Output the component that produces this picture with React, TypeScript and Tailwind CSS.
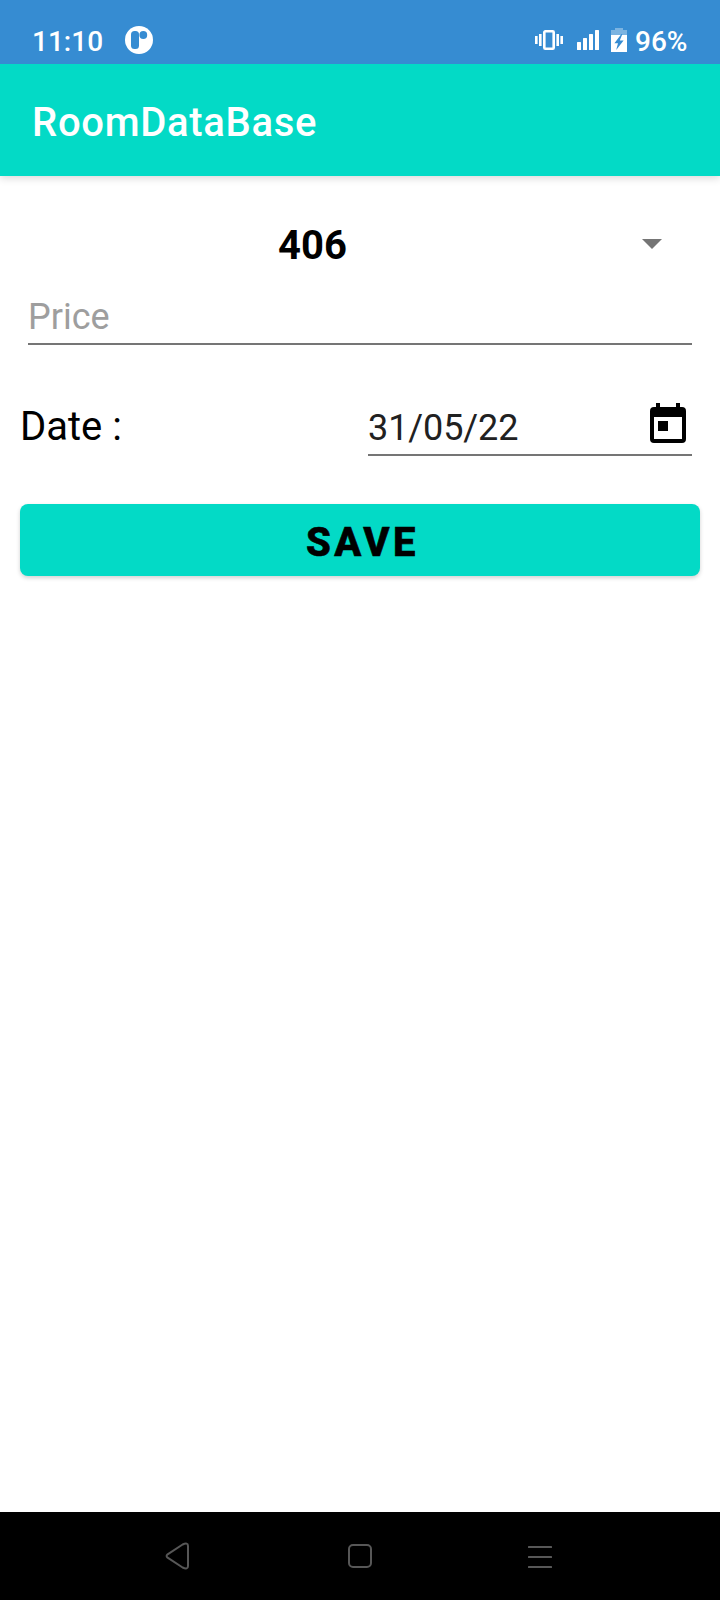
function StatusBar() {
  return (
    <div className="relative z-20 flex h-16 items-start bg-[#368cd2] pr-8 pl-8 text-[28px] leading-8 font-medium text-white">
      <span className="mt-[26px] w-[70px] whitespace-nowrap">11:10</span>
      <svg className="mt-[26px] ml-[23px]" width="28" height="28" viewBox="0 0 28 28">
        <circle cx="14" cy="14" r="14" fill="#fff" />
        <rect x="6" y="5" width="8" height="18" rx="3.5" fill="#368cd2" />
        <circle cx="18.3" cy="9" r="3.9" fill="#368cd2" />
      </svg>
      <div className="ml-auto flex">
        <svg className="mt-[30px]" width="28" height="20" viewBox="0 0 28 20" fill="#fff">
          <rect x="0" y="6" width="2.6" height="8" />
          <rect x="4" y="4" width="2.6" height="12" />
          <rect x="9.3" y="1.3" width="9.4" height="17.4" rx="1" fill="none" stroke="#fff" strokeWidth="2.6" />
          <rect x="21.4" y="4" width="2.6" height="12" />
          <rect x="25.4" y="6" width="2.6" height="8" />
        </svg>
        <svg className="mt-[30px] ml-[14px]" width="22" height="20" viewBox="0 0 22 20" fill="#fff">
          <rect x="0" y="12" width="4" height="8" rx=".5" />
          <rect x="6" y="8" width="4" height="12" rx=".5" />
          <rect x="12" y="4" width="4" height="16" rx=".5" />
          <rect x="18" y="0" width="4" height="20" rx=".5" />
        </svg>
        <svg className="mt-[28px] ml-[12px]" width="16" height="24" viewBox="0 0 16 24">
          <path d="M4 0h8v2h4v5H0V2h4z" fill="#fff" fillOpacity=".35" />
          <path d="M0 7h16v17H0z" fill="#fff" />
          <path d="M10.4 6 3.4 15.2H7L5.2 22 12.6 12.4H8.8L11.4 6z" fill="#368cd2" />
        </svg>
        <span className="mt-[26px] ml-[8px] w-[53px] whitespace-nowrap">96%</span>
      </div>
    </div>
  );
}

function NavigationBar() {
  return (
    <div className="flex h-[88px] items-center justify-between bg-black px-[164px]">
      <svg width="28" height="28" viewBox="0 0 28 28" fill="none" stroke="#575757" strokeWidth="2">
        <path d="M3.6 12.3 18.6 2.5Q24 0 24 4V24Q24 28 18.6 25.5L3.6 15.7Q1.6 14 3.6 12.3Z" strokeLinejoin="round" />
      </svg>
      <svg width="24" height="24" viewBox="0 0 24 24" fill="none" stroke="#575757" strokeWidth="2">
        <rect x="1" y="1" width="22" height="22" rx="4" />
      </svg>
      <svg width="28" height="28" viewBox="0 0 28 28" fill="#575757">
        <rect x="0" y="4" width="24" height="2" rx=".5" />
        <rect x="0" y="14" width="24" height="2" rx=".5" />
        <rect x="0" y="24" width="24" height="2" rx=".5" />
      </svg>
    </div>
  );
}

export default function App() {
  return (
    <div className="flex h-[1600px] w-[720px] flex-col bg-white font-['Roboto','Liberation_Sans',sans-serif] text-black">
      <StatusBar />
      <header className="z-10 flex h-28 items-center bg-[#03dac6] pt-[6px] pl-8 shadow-[0_2px_8px_rgba(0,0,0,0.16)]">
        <h1 className="text-[40px] leading-[48px] font-medium tracking-[0.7px] whitespace-nowrap text-white">RoomDataBase</h1>
      </header>
      <main className="flex flex-1 flex-col px-5">
        <div className="mt-10 flex h-14 items-center">
          <span className="w-[585px] pt-1 text-center text-[40px] leading-[56px] font-bold">406</span>
          <svg className="ml-[37px]" width="20" height="10" viewBox="0 0 20 10">
            <path d="M0 0h20L10 10z" fill="#757575" />
          </svg>
        </div>
        <div className="mx-2 flex h-[73px] items-end border-b-2 border-[#757575] pb-1">
          <span className="text-[36px] leading-[44px] text-[#9e9e9e]">Price</span>
        </div>
        <div className="mt-[35px] flex h-[76px]">
          <span className="w-[348px] pt-[23px] text-[40px] leading-[48px]">Date :</span>
          <div className="mr-2 flex flex-1 items-end justify-between border-b-2 border-[#757575]">
            <span className="pb-1 text-[36px] leading-[44px] tracking-[-0.1px] text-[#212121]">31/05/22</span>
            <svg className="mb-[11px] mr-[6px]" width="36" height="40" viewBox="0 0 36 40">
              <path
                fillRule="evenodd"
                d="M6 0h4v4h16V0h4v4h2a4 4 0 0 1 4 4v28a4 4 0 0 1-4 4H4a4 4 0 0 1-4-4V8a4 4 0 0 1 4-4h2zM4 14v22h28V14zM8 18h10v10H8z"
              />
            </svg>
          </div>
        </div>
        <button className="mt-12 flex h-[72px] items-center justify-center rounded-[8px] bg-[#03dac6] pt-[6px] pl-[5px] text-[40px] leading-[48px] font-extrabold tracking-[3.5px] shadow-[0_2px_4px_rgba(0,0,0,0.18)] [-webkit-text-stroke:0.6px_black]">
          SAVE
        </button>
      </main>
      <NavigationBar />
    </div>
  );
}
